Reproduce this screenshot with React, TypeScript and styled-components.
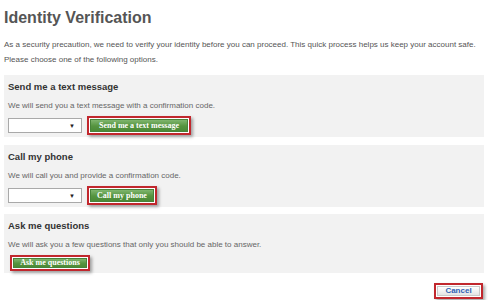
import React from "react";
import styled, { createGlobalStyle } from "styled-components";

const GlobalStyle = createGlobalStyle`
  body {
    margin: 0;
    background: #fff;
    font-family: "Liberation Sans", Arial, sans-serif;
  }
`;

const Page = styled.div`
  width: 488px;
  height: 300px;
  box-sizing: border-box;
  padding: 8px 4px 0 4px;
  overflow: hidden;
`;

const Title = styled.h1`
  margin: 0 0 12px 0;
  font-size: 16px;
  font-weight: bold;
  color: #555;
  line-height: 20px;
`;

const Intro = styled.p`
  margin: 0 0 5px 0;
  font-size: 8px;
  line-height: 10px;
  color: #555;
`;

const Panel = styled.section<{ $gap: number }>`
  background: #f2f2f2;
  padding: 6px 4px 2px 4px;
  margin-top: ${(p) => p.$gap}px;
`;

const PanelTitle = styled.h2`
  margin: 0 0 8px 0;
  font-size: 9.5px;
  line-height: 12px;
  font-weight: bold;
  color: #333;
`;

const PanelText = styled.p`
  margin: 0 0 5px 0;
  font-size: 8px;
  line-height: 10px;
  color: #666;
`;

const Controls = styled.div<{ $indent: number }>`
  display: flex;
  align-items: center;
  gap: 5px;
  padding-left: ${(p) => p.$indent}px;
`;

const SelectBox = styled.div`
  width: 66px;
  height: 13px;
  background: #fff;
  border: 1px solid #a9a9a9;
  display: flex;
  align-items: center;
  justify-content: flex-end;
  padding-right: 6px;
  box-sizing: content-box;
  font-size: 6px;
  color: #222;
`;

const Highlight = styled.div`
  border: 2px solid #c1272d;
  padding: 1px;
  background: #fff;
  box-shadow: 2px 2px 3px rgba(0, 0, 0, 0.35);
  display: flex;
`;

const GreenButton = styled.button<{ $w: number; $h: number }>`
  width: ${(p) => p.$w}px;
  height: ${(p) => p.$h}px;
  padding: 0;
  border: 1px solid #47833a;
  background: linear-gradient(#7fb56e, #55943f 55%, #4b8a37);
  color: #fff;
  font-family: "Liberation Serif", "Times New Roman", serif;
  font-weight: bold;
  font-size: 8px;
  line-height: 8px;
  cursor: pointer;
`;

const Footer = styled.div`
  display: flex;
  justify-content: flex-end;
  padding: 10px 1px 0 0;
`;

const CancelButton = styled.button`
  width: 43px;
  height: 10px;
  padding: 0;
  border: 1px solid #c9c9c9;
  background: linear-gradient(#ffffff, #e4e4e4);
  color: #2f5fb3;
  font-family: "Liberation Sans", Arial, sans-serif;
  font-weight: bold;
  font-size: 8px;
  line-height: 8px;
`;

const options = [
  {
    title: "Send me a text message",
    text: "We will send you a text message with a confirmation code.",
    button: "Send me a text message",
    width: 98,
    height: 13,
    gap: 10,
    select: true,
  },
  {
    title: "Call my phone",
    text: "We will call you and provide a confirmation code.",
    button: "Call my phone",
    width: 64,
    height: 13,
    gap: 8,
    select: true,
  },
  {
    title: "Ask me questions",
    text: "We will ask you a few questions that only you should be able to answer.",
    button: "Ask me questions",
    width: 74,
    height: 10,
    gap: 7,
    select: false,
  },
];

const App = () => {
  return (
    <Page>
      <GlobalStyle />
      <Title>Identity Verification</Title>
      <Intro>
        As a security precaution, we need to verify your identity before you can proceed. This
        quick process helps us keep your account safe.
      </Intro>
      <Intro>Please choose one of the following options.</Intro>
      {options.map((o) => (
        <Panel key={o.title} $gap={o.gap}>
          <PanelTitle>{o.title}</PanelTitle>
          <PanelText>{o.text}</PanelText>
          <Controls $indent={o.select ? 0 : 2}>
            {o.select && <SelectBox>▼</SelectBox>}
            <Highlight>
              <GreenButton $w={o.width} $h={o.height}>
                {o.button}
              </GreenButton>
            </Highlight>
          </Controls>
        </Panel>
      ))}
      <Footer>
        <Highlight>
          <CancelButton>Cancel</CancelButton>
        </Highlight>
      </Footer>
    </Page>
  );
};

export default App;
